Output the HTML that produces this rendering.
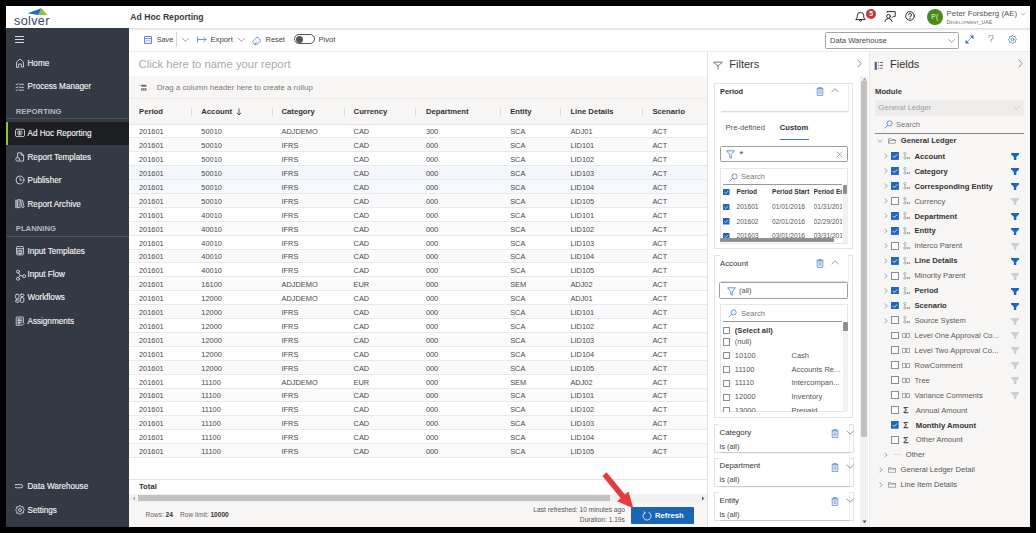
<!DOCTYPE html>
<html><head><meta charset="utf-8"><style>*{box-sizing:border-box;margin:0;padding:0}
html,body{width:1036px;height:533px;overflow:hidden;background:#000}
body{font-family:"Liberation Sans",sans-serif;color:#333;position:relative}
.a{position:absolute;white-space:nowrap}
.si{font-size:8.15px;color:#f4f5f6;-webkit-text-stroke:0.12px #f4f5f6;line-height:10px;left:27.5px}
.sec{left:15.8px;font-size:7.7px;font-weight:bold;color:#b4b8be;line-height:10px}
.sep{left:6px;width:122.5px;height:1px;background:#4b5159}
</style></head><body>
<div class="a" style="left:6px;top:6px;width:1024px;height:521px;background:#fff"></div>
<div class="a" style="left:6px;top:6px;width:1024px;height:22px;background:#fff"></div>
<svg class="a" style="left:26px;top:7px" width="24" height="10" viewBox="0 0 24 10"><path d="M1.5 6.3 L15.5 1.3 L12.4 7.9 Z" fill="#1f6cc2"/><path d="M15.5 1.3 L21.7 8.3 L12.4 7.9 Z" fill="#8dc540"/></svg>
<div class="a" style="left:14px;top:13.8px;font-size:12.6px;line-height:14px;color:#3a4766;letter-spacing:0.35px">solver</div>
<div class="a" style="left:130.3px;top:11.6px;font-size:8.65px;line-height:11px;font-weight:bold;color:#383838">Ad Hoc Reporting</div>
<svg class="a" style="left:854.5px;top:11px" width="11" height="11" viewBox="0 0 11 11"><path d="M1 8.4 Q2.3 7.6 2.3 5.8 V4.6 A3.2 3.2 0 0 1 8.7 4.6 V5.8 Q8.7 7.6 10 8.4 Z" stroke="#2a2a2a" stroke-width="1" fill="none" stroke-linecap="round" stroke-linejoin="round"/><path d="M4.3 9.6 Q5.5 10.8 6.7 9.6" stroke="#2a2a2a" stroke-width="1" fill="none" stroke-linecap="round" stroke-linejoin="round"/></svg>
<div class="a" style="left:866.1px;top:8.5px;width:10px;height:10px;border-radius:50%;background:#c93434;color:#fff;font-size:6.8px;font-weight:bold;line-height:10px;text-align:center">5</div>
<svg class="a" style="left:883.8px;top:11px" width="12" height="11" viewBox="0 0 12 11"><circle cx="4.5" cy="5.3" r="1.9" stroke="#2a2a2a" stroke-width="1" fill="none" stroke-linecap="round" stroke-linejoin="round"/><path d="M0.8 10.4 Q1.3 7.6 4.5 7.6 Q7.7 7.6 8.2 10.4 M3 1.3 V0.6 H11.2 V5.4 H9.3 L8.2 6.5" stroke="#2a2a2a" stroke-width="1" fill="none" stroke-linecap="round" stroke-linejoin="round"/></svg>
<svg class="a" style="left:905.4px;top:11.4px" width="10" height="10" viewBox="0 0 10 10"><circle cx="5" cy="5" r="4.3" stroke="#2a2a2a" stroke-width="1" fill="none" stroke-linecap="round" stroke-linejoin="round"/><path d="M3.6 3.9 A1.45 1.45 0 1 1 5 5.4 V6.1" stroke="#2a2a2a" stroke-width="0.9" fill="none" stroke-linecap="round"/><circle cx="5" cy="7.6" r="0.55" fill="#2a2a2a"/></svg>
<div class="a" style="left:926.6px;top:8.9px;width:16.4px;height:16.4px;border-radius:50%;background:#4a8a18;color:#eef5e0;font-size:7px;font-weight:normal;line-height:16.4px;text-align:center">P(</div>
<div class="a" style="left:946.6px;top:9.3px;font-size:7.9px;line-height:10px;color:#555">Peter Forsberg (AE)</div>
<div class="a" style="left:946.6px;top:19.3px;font-size:5.05px;line-height:7px;color:#666;font-variant:small-caps;letter-spacing:0.1px">Development_UAE</div>
<svg class="a" style="left:1020px;top:12px" width="6" height="4" viewBox="0 0 6 4"><path d="M0.5 0.8 L3 3 L5.5 0.8" stroke="#999" stroke-width="0.7" fill="none"/></svg>
<div class="a" style="left:128.5px;top:28px;width:901.5px;height:2.5px;background:linear-gradient(#d9d9d9,rgba(255,255,255,0))"></div>
<div class="a" style="left:6px;top:28px;width:122.5px;height:499px;background:#343a43"></div>
<div class="a" style="left:15px;top:36px;width:9px;height:1.2px;background:#d8dadd"></div>
<div class="a" style="left:15px;top:39px;width:9px;height:1.2px;background:#d8dadd"></div>
<div class="a" style="left:15px;top:42px;width:9px;height:1.2px;background:#d8dadd"></div>
<div class="a" style="left:6px;top:122px;width:122.5px;height:22.6px;background:#1e1f23"></div>
<div class="a" style="left:6px;top:122px;width:2.2px;height:22.6px;background:#8cc43f"></div>
<div class="a sec" style="top:106.6px">REPORTING</div>
<div class="a sep" style="top:118px"></div>
<div class="a sec" style="top:223.8px">PLANNING</div>
<div class="a sep" style="top:235.6px"></div>
<div class="a si" style="top:58.8px">Home</div>
<svg class="a" style="left:14.5px;top:58px" width="10" height="10" viewBox="0 0 10 10"><path d="M1.5 9 V4.2 L5 1 L8.5 4.2 V9 H6.3 V6 H3.7 V9 Z" stroke="#d5d7da" stroke-width="0.9" fill="none" stroke-linecap="round" stroke-linejoin="round"/></svg>
<div class="a si" style="top:82.3px">Process Manager</div>
<svg class="a" style="left:14.5px;top:81.5px" width="10" height="10" viewBox="0 0 10 10"><path d="M1 2.2 L1.8 3 L3 1.6 M1 5.2 L1.8 6 L3 4.6 M1 8 L1.8 8.6 L3 7.4 M4.5 2.3 H8.5 M4.5 5.3 H8.5 M4.5 8.1 H8.5" stroke="#d5d7da" stroke-width="0.9" fill="none" stroke-linecap="round" stroke-linejoin="round"/></svg>
<div class="a si" style="top:129.20000000000002px">Ad Hoc Reporting</div>
<svg class="a" style="left:14.5px;top:128.4px" width="10" height="10" viewBox="0 0 10 10"><rect x="0.5" y="1.2" width="9" height="7.4" rx="1.4" stroke="#d5d7da" stroke-width="0.9" fill="none" stroke-linecap="round" stroke-linejoin="round"/><path d="M2.8 3.2 H7 M2.2 5 H7.4 M3.2 6.8 H6.4 M4.6 3.2 V6.8" stroke="#d5d7da" stroke-width="0.9" fill="none" stroke-linecap="round" stroke-linejoin="round"/></svg>
<div class="a si" style="top:152.60000000000002px">Report Templates</div>
<svg class="a" style="left:14.5px;top:151.8px" width="10" height="10" viewBox="0 0 10 10"><path d="M2.6 5.2 V0.9 H6.2 L8.6 3.3 V9.1 H4.6 M6.2 0.9 V3.3 H8.6" stroke="#d5d7da" stroke-width="0.9" fill="none" stroke-linecap="round" stroke-linejoin="round"/><circle cx="2.7" cy="7.3" r="1.9" stroke="#d5d7da" stroke-width="0.9" fill="none" stroke-linecap="round" stroke-linejoin="round"/></svg>
<div class="a si" style="top:176.10000000000002px">Publisher</div>
<svg class="a" style="left:14.5px;top:175.3px" width="10" height="10" viewBox="0 0 10 10"><circle cx="5" cy="5" r="4" stroke="#d5d7da" stroke-width="0.9" fill="none" stroke-linecap="round" stroke-linejoin="round"/><path d="M5 2.8 V5.2 H7" stroke="#d5d7da" stroke-width="0.9" fill="none" stroke-linecap="round" stroke-linejoin="round"/></svg>
<div class="a si" style="top:199.8px">Report Archive</div>
<svg class="a" style="left:14.5px;top:199px" width="10" height="10" viewBox="0 0 10 10"><g transform="translate(-0.7 -0.5)"><path d="M0.3 1.6 H3.2 V9.2 H0.3 Z" fill="#8f9399" stroke="#c9cbce" stroke-width="0.6"/><path d="M3.9 1.2 H5.7 V9.2 H3.9 Z" stroke="#d5d7da" stroke-width="0.9" fill="none" stroke-linecap="round" stroke-linejoin="round"/><path d="M6.6 1.6 Q7.6 0.8 8.4 2.2 L9.7 8.2 Q9.4 9.4 8.2 9.2 Z" stroke="#d5d7da" stroke-width="0.9" fill="none" stroke-linecap="round" stroke-linejoin="round"/></g></svg>
<div class="a si" style="top:246.8px">Input Templates</div>
<svg class="a" style="left:14.5px;top:246px" width="10" height="10" viewBox="0 0 10 10"><rect x="1.6" y="0.3" width="6.8" height="8.6" rx="1.2" stroke="#d5d7da" stroke-width="0.9" fill="none" stroke-linecap="round" stroke-linejoin="round"/><path d="M1.6 2.7 H8.4 M3.2 4.7 H6.8 V7.6 H3.2 Z M5 4.7 V7.6" stroke="#d5d7da" stroke-width="0.9" fill="none" stroke-linecap="round" stroke-linejoin="round"/></svg>
<div class="a si" style="top:270.2px">Input Flow</div>
<svg class="a" style="left:14.5px;top:269.4px" width="11" height="12" viewBox="0 0 11 12"><circle cx="3" cy="2.6" r="1.5" stroke="#d5d7da" stroke-width="0.9" fill="none" stroke-linecap="round" stroke-linejoin="round"/><circle cx="3" cy="9.8" r="1.5" stroke="#d5d7da" stroke-width="0.9" fill="none" stroke-linecap="round" stroke-linejoin="round"/><circle cx="9.2" cy="7.2" r="1.5" stroke="#d5d7da" stroke-width="0.9" fill="none" stroke-linecap="round" stroke-linejoin="round"/><path d="M3.6 4 L5 6.6 L7.7 7.1 M5 6.6 L3.6 8.4" stroke="#d5d7da" stroke-width="0.9" fill="none" stroke-linecap="round" stroke-linejoin="round"/></svg>
<div class="a si" style="top:293.3px">Workflows</div>
<svg class="a" style="left:14.5px;top:292.5px" width="10" height="10" viewBox="0 0 10 10"><rect x="0.6" y="1.3" width="3.4" height="4.4" rx="0.9" stroke="#d5d7da" stroke-width="0.9" fill="none" stroke-linecap="round" stroke-linejoin="round"/><rect x="0.6" y="6.9" width="3.4" height="2.4" rx="0.9" stroke="#d5d7da" stroke-width="0.9" fill="none" stroke-linecap="round" stroke-linejoin="round"/><rect x="5.4" y="1.1" width="3.4" height="2.4" rx="0.9" stroke="#d5d7da" stroke-width="0.9" fill="none" stroke-linecap="round" stroke-linejoin="round"/><rect x="5.4" y="4.7" width="3.4" height="4.6" rx="0.9" stroke="#d5d7da" stroke-width="0.9" fill="none" stroke-linecap="round" stroke-linejoin="round"/></svg>
<div class="a si" style="top:316.8px">Assignments</div>
<svg class="a" style="left:14.5px;top:316px" width="10" height="10" viewBox="0 0 10 10"><path d="M8.4 6.5 V1.8 Q8.4 1 7.6 1 H2 Q1.2 1 1.2 1.8 V9 Q1.2 9.8 2 9.8 H5.6" stroke="#d5d7da" stroke-width="0.9" fill="none" stroke-linecap="round" stroke-linejoin="round"/><path d="M2.8 3 H6.8 M2.8 4.6 H6.8 M2.8 6.2 H6.8 M2.8 7.8 H5 M4 2.4 V8.4 M6.2 8.6 L7.1 9.4 L8.9 7.6" stroke="#d5d7da" stroke-width="0.9" fill="none" stroke-linecap="round" stroke-linejoin="round"/></svg>
<div class="a si" style="top:482.1px">Data Warehouse</div>
<svg class="a" style="left:14.5px;top:481.3px" width="10" height="10" viewBox="0 0 10 10"><rect x="-0.6" y="3.6" width="8.2" height="3.2" rx="1.6" stroke="#d5d7da" stroke-width="0.9" fill="none" stroke-linecap="round" stroke-linejoin="round"/></svg>
<div class="a si" style="top:505.8px">Settings</div>
<svg class="a" style="left:14.5px;top:505px" width="10" height="10" viewBox="0 0 10 10"><circle cx="5" cy="5" r="1.5" stroke="#d5d7da" stroke-width="0.9" fill="none" stroke-linecap="round" stroke-linejoin="round"/><path d="M5 0.6 L6.1 1.8 L7.9 1.6 L8 3.4 L9.4 4.6 L8.4 6 L8.6 7.9 L6.8 8 L5 9.4 L3.6 8.2 L1.9 8.4 L1.8 6.6 L0.6 5 L1.8 3.6 L1.6 1.8 L3.4 1.8 Z" stroke="#d5d7da" stroke-width="0.9" fill="none" stroke-linecap="round" stroke-linejoin="round"/></svg>
<svg class="a" style="left:144px;top:35.6px" width="8" height="8" viewBox="0 0 8 8"><path d="M0.5 0.5 H7.5 V7.5 H0.5 Z" stroke="#6b74c4" stroke-width="0.9" fill="none"/><path d="M0.5 2.6 H7.5" stroke="#6b74c4" stroke-width="0.9"/><path d="M2 7.5 V4.6 H6 V7.5" stroke="#7fa6dc" stroke-width="0.7" fill="none"/></svg>
<div class="a" style="left:156.7px;top:34.6px;font-size:7.3px;line-height:10px;color:#444">Save</div>
<div class="a" style="left:176.3px;top:32px;width:0.8px;height:14.6px;background:#d6d6d6"></div>
<svg class="a" style="left:182px;top:38px" width="7" height="4" viewBox="0 0 7 4"><path d="M0.5 0.5 L3.5 3.3 L6.5 0.5" stroke="#777" stroke-width="0.7" fill="none" stroke-linecap="round" stroke-linejoin="round"/></svg>
<svg class="a" style="left:197px;top:35.8px" width="10" height="7" viewBox="0 0 10 7"><path d="M0.5 1 V6 M0.5 3.5 H9 M6.8 1.3 L9 3.5 L6.8 5.7" stroke="#4a7bc8" stroke-width="0.8" fill="none" stroke-linecap="round" stroke-linejoin="round"/></svg>
<div class="a" style="left:210.4px;top:34.6px;font-size:7.75px;line-height:10px;color:#444">Export</div>
<svg class="a" style="left:238px;top:38px" width="7" height="4" viewBox="0 0 7 4"><path d="M0.5 0.5 L3.5 3.3 L6.5 0.5" stroke="#777" stroke-width="0.7" fill="none" stroke-linecap="round" stroke-linejoin="round"/></svg>
<svg class="a" style="left:252px;top:35.5px" width="10" height="9" viewBox="0 0 10 9"><path d="M0.8 5.5 L5 1 L9 4.5 L5 8.3 H2.8 Z M2.8 8.3 L4.5 6.2" stroke="#4a7bc8" stroke-width="0.8" fill="none" stroke-linecap="round" stroke-linejoin="round"/></svg>
<div class="a" style="left:265.6px;top:35.3px;font-size:7.35px;line-height:10px;color:#444">Reset</div>
<div class="a" style="left:294.2px;top:34.2px;width:20.8px;height:10.2px;border:0.8px solid #555;border-radius:6px"></div>
<div class="a" style="left:295.5px;top:35.9px;width:7.2px;height:7.2px;border-radius:50%;background:#555"></div>
<div class="a" style="left:318.4px;top:35.2px;font-size:7.6px;line-height:10px;color:#444">Pivot</div>
<div class="a" style="left:825px;top:32.2px;width:133.5px;height:16.4px;border:0.8px solid #a3a3a3;border-radius:1.5px;background:#fff"></div>
<div class="a" style="left:830px;top:36px;font-size:7.6px;line-height:10px;color:#444">Data Warehouse</div>
<svg class="a" style="left:947.7px;top:38.8px" width="7" height="4" viewBox="0 0 7 4"><path d="M0.5 0.5 L3.5 3.3 L6.5 0.5" stroke="#777" stroke-width="0.7" fill="none" stroke-linecap="round" stroke-linejoin="round"/></svg>
<svg class="a" style="left:964.8px;top:35.4px" width="9" height="9" viewBox="0 0 9 9"><path d="M1.6 7.4 L7.4 1.6" stroke="#3d6fc4" stroke-width="0.7"/><path d="M8.6 0.4 L8.4 4.2 L4.8 0.6 Z M0.4 8.6 L0.6 4.8 L4.2 8.4 Z" fill="#3d6fc4"/></svg>
<svg class="a" style="left:987.5px;top:35.2px" width="6" height="9" viewBox="0 0 6 9"><path d="M0.8 2.2 A2.2 2.2 0 1 1 3 4.4 V6.4" stroke="#4a7bc8" stroke-width="0.75" fill="none" stroke-linecap="round"/><circle cx="3" cy="8.1" r="0.45" fill="#4a7bc8"/></svg>
<svg class="a" style="left:1007.5px;top:35.1px" width="9" height="9" viewBox="0 0 10 10"><circle cx="5" cy="5" r="1.6" stroke="#4a7bc8" stroke-width="0.8" fill="none" stroke-linecap="round" stroke-linejoin="round"/><path d="M5 0.6 L6.2 1.7 L7.9 1.6 L8.1 3.3 L9.4 4.6 L8.3 6 L8.4 7.8 L6.7 8.1 L5 9.4 L3.7 8.2 L1.9 8.3 L1.7 6.6 L0.6 5 L1.8 3.6 L1.7 1.8 L3.4 1.8 Z" stroke="#4a7bc8" stroke-width="0.8" fill="none" stroke-linecap="round" stroke-linejoin="round"/></svg>
<div class="a" style="left:128.5px;top:50.8px;width:901.5px;height:0.8px;background:#ececec"></div>
<div class="a" style="left:138.6px;top:57.5px;font-size:11.3px;line-height:13px;color:#a9a9a9">Click here to name your report</div>
<div class="a" style="left:128.5px;top:76.2px;width:579px;height:48.3px;background:#f7f6f5"></div>
<div class="a" style="left:128.5px;top:98px;width:579px;height:0.7px;background:#ebebeb"></div>
<div class="a" style="left:128.5px;top:124px;width:579px;height:0.8px;background:#e4e6ea"></div>
<svg class="a" style="left:139px;top:84px" width="8" height="8" viewBox="0 0 8 8"><rect x="0.1" y="0.9" width="1.1" height="1" fill="#c9a0a0"/><rect x="2.2" y="0.8" width="5.2" height="1.8" fill="#5f5f5f"/><rect x="2.2" y="4" width="5.2" height="2.8" fill="#7a7a7a"/><path d="M3.9 4 V6.8 M5.6 4 V6.8" stroke="#e8e8e8" stroke-width="0.5"/></svg>
<div class="a" style="left:156.7px;top:82.6px;font-size:7.85px;line-height:10px;color:#777">Drag a column header here to create a rollup</div>
<div class="a" style="left:139px;top:107.4px;font-size:7.7px;line-height:10px;font-weight:bold;color:#333">Period</div>
<div class="a" style="left:201.3px;top:107.4px;font-size:7.7px;line-height:10px;font-weight:bold;color:#333">Account</div>
<div class="a" style="left:281.5px;top:107.4px;font-size:7.7px;line-height:10px;font-weight:bold;color:#333">Category</div>
<div class="a" style="left:353.6px;top:107.4px;font-size:7.7px;line-height:10px;font-weight:bold;color:#333">Currency</div>
<div class="a" style="left:425.9px;top:107.4px;font-size:7.7px;line-height:10px;font-weight:bold;color:#333">Department</div>
<div class="a" style="left:510.2px;top:107.4px;font-size:7.7px;line-height:10px;font-weight:bold;color:#333">Entity</div>
<div class="a" style="left:570.4px;top:107.4px;font-size:7.7px;line-height:10px;font-weight:bold;color:#333">Line Details</div>
<div class="a" style="left:652.4px;top:107.4px;font-size:7.7px;line-height:10px;font-weight:bold;color:#333">Scenario</div>
<svg class="a" style="left:236px;top:108px" width="6" height="8" viewBox="0 0 6 8"><path d="M3 0.5 V7 M0.8 4.8 L3 7 L5.2 4.8" stroke="#333" stroke-width="0.8" fill="none"/></svg>
<div class="a" style="left:191.2px;top:108px;width:0.7px;height:8px;background:#dcdcdc"></div>
<div class="a" style="left:271.5px;top:108px;width:0.7px;height:8px;background:#dcdcdc"></div>
<div class="a" style="left:343.5px;top:108px;width:0.7px;height:8px;background:#dcdcdc"></div>
<div class="a" style="left:415.2px;top:108px;width:0.7px;height:8px;background:#dcdcdc"></div>
<div class="a" style="left:500px;top:108px;width:0.7px;height:8px;background:#dcdcdc"></div>
<div class="a" style="left:560px;top:108px;width:0.7px;height:8px;background:#dcdcdc"></div>
<div class="a" style="left:641.8px;top:108px;width:0.7px;height:8px;background:#dcdcdc"></div>
<div class="a" style="left:128.5px;top:124.50px;width:579px;height:13.90px;background:#fff;border-bottom:0.7px solid #e6e9ee"></div>
<div class="a" style="left:139px;top:127.30px;font-size:7.4px;line-height:10px;color:#484848">201601</div>
<div class="a" style="left:201.3px;top:127.30px;font-size:7.4px;line-height:10px;color:#484848">50010</div>
<div class="a" style="left:281.5px;top:127.30px;font-size:7.4px;line-height:10px;color:#484848">ADJDEMO</div>
<div class="a" style="left:353.6px;top:127.30px;font-size:7.4px;line-height:10px;color:#484848">CAD</div>
<div class="a" style="left:425.9px;top:127.30px;font-size:7.4px;line-height:10px;color:#484848">300</div>
<div class="a" style="left:510.2px;top:127.30px;font-size:7.4px;line-height:10px;color:#484848">SCA</div>
<div class="a" style="left:570.4px;top:127.30px;font-size:7.4px;line-height:10px;color:#484848">ADJ01</div>
<div class="a" style="left:652.4px;top:127.30px;font-size:7.4px;line-height:10px;color:#484848">ACT</div>
<div class="a" style="left:128.5px;top:138.40px;width:579px;height:13.90px;background:#fafafa;border-bottom:0.7px solid #e6e9ee"></div>
<div class="a" style="left:139px;top:141.20px;font-size:7.4px;line-height:10px;color:#484848">201601</div>
<div class="a" style="left:201.3px;top:141.20px;font-size:7.4px;line-height:10px;color:#484848">50010</div>
<div class="a" style="left:281.5px;top:141.20px;font-size:7.4px;line-height:10px;color:#484848">IFRS</div>
<div class="a" style="left:353.6px;top:141.20px;font-size:7.4px;line-height:10px;color:#484848">CAD</div>
<div class="a" style="left:425.9px;top:141.20px;font-size:7.4px;line-height:10px;color:#484848">000</div>
<div class="a" style="left:510.2px;top:141.20px;font-size:7.4px;line-height:10px;color:#484848">SCA</div>
<div class="a" style="left:570.4px;top:141.20px;font-size:7.4px;line-height:10px;color:#484848">LID101</div>
<div class="a" style="left:652.4px;top:141.20px;font-size:7.4px;line-height:10px;color:#484848">ACT</div>
<div class="a" style="left:128.5px;top:152.30px;width:579px;height:13.90px;background:#fff;border-bottom:0.7px solid #e6e9ee"></div>
<div class="a" style="left:139px;top:155.10px;font-size:7.4px;line-height:10px;color:#484848">201601</div>
<div class="a" style="left:201.3px;top:155.10px;font-size:7.4px;line-height:10px;color:#484848">50010</div>
<div class="a" style="left:281.5px;top:155.10px;font-size:7.4px;line-height:10px;color:#484848">IFRS</div>
<div class="a" style="left:353.6px;top:155.10px;font-size:7.4px;line-height:10px;color:#484848">CAD</div>
<div class="a" style="left:425.9px;top:155.10px;font-size:7.4px;line-height:10px;color:#484848">000</div>
<div class="a" style="left:510.2px;top:155.10px;font-size:7.4px;line-height:10px;color:#484848">SCA</div>
<div class="a" style="left:570.4px;top:155.10px;font-size:7.4px;line-height:10px;color:#484848">LID102</div>
<div class="a" style="left:652.4px;top:155.10px;font-size:7.4px;line-height:10px;color:#484848">ACT</div>
<div class="a" style="left:128.5px;top:166.20px;width:579px;height:13.90px;background:#f3f6fa;border-bottom:0.7px solid #e6e9ee"></div>
<div class="a" style="left:139px;top:169.00px;font-size:7.4px;line-height:10px;color:#484848">201601</div>
<div class="a" style="left:201.3px;top:169.00px;font-size:7.4px;line-height:10px;color:#484848">50010</div>
<div class="a" style="left:281.5px;top:169.00px;font-size:7.4px;line-height:10px;color:#484848">IFRS</div>
<div class="a" style="left:353.6px;top:169.00px;font-size:7.4px;line-height:10px;color:#484848">CAD</div>
<div class="a" style="left:425.9px;top:169.00px;font-size:7.4px;line-height:10px;color:#484848">000</div>
<div class="a" style="left:510.2px;top:169.00px;font-size:7.4px;line-height:10px;color:#484848">SCA</div>
<div class="a" style="left:570.4px;top:169.00px;font-size:7.4px;line-height:10px;color:#484848">LID103</div>
<div class="a" style="left:652.4px;top:169.00px;font-size:7.4px;line-height:10px;color:#484848">ACT</div>
<div class="a" style="left:128.5px;top:180.10px;width:579px;height:13.90px;background:#f5f9fd;border-bottom:0.7px solid #e6e9ee"></div>
<div class="a" style="left:139px;top:182.90px;font-size:7.4px;line-height:10px;color:#484848">201601</div>
<div class="a" style="left:201.3px;top:182.90px;font-size:7.4px;line-height:10px;color:#484848">50010</div>
<div class="a" style="left:281.5px;top:182.90px;font-size:7.4px;line-height:10px;color:#484848">IFRS</div>
<div class="a" style="left:353.6px;top:182.90px;font-size:7.4px;line-height:10px;color:#484848">CAD</div>
<div class="a" style="left:425.9px;top:182.90px;font-size:7.4px;line-height:10px;color:#484848">000</div>
<div class="a" style="left:510.2px;top:182.90px;font-size:7.4px;line-height:10px;color:#484848">SCA</div>
<div class="a" style="left:570.4px;top:182.90px;font-size:7.4px;line-height:10px;color:#484848">LID104</div>
<div class="a" style="left:652.4px;top:182.90px;font-size:7.4px;line-height:10px;color:#484848">ACT</div>
<div class="a" style="left:128.5px;top:194.00px;width:579px;height:13.90px;background:#fafafa;border-bottom:0.7px solid #e6e9ee"></div>
<div class="a" style="left:139px;top:196.80px;font-size:7.4px;line-height:10px;color:#484848">201601</div>
<div class="a" style="left:201.3px;top:196.80px;font-size:7.4px;line-height:10px;color:#484848">50010</div>
<div class="a" style="left:281.5px;top:196.80px;font-size:7.4px;line-height:10px;color:#484848">IFRS</div>
<div class="a" style="left:353.6px;top:196.80px;font-size:7.4px;line-height:10px;color:#484848">CAD</div>
<div class="a" style="left:425.9px;top:196.80px;font-size:7.4px;line-height:10px;color:#484848">000</div>
<div class="a" style="left:510.2px;top:196.80px;font-size:7.4px;line-height:10px;color:#484848">SCA</div>
<div class="a" style="left:570.4px;top:196.80px;font-size:7.4px;line-height:10px;color:#484848">LID105</div>
<div class="a" style="left:652.4px;top:196.80px;font-size:7.4px;line-height:10px;color:#484848">ACT</div>
<div class="a" style="left:128.5px;top:207.90px;width:579px;height:13.90px;background:#fff;border-bottom:0.7px solid #e6e9ee"></div>
<div class="a" style="left:139px;top:210.70px;font-size:7.4px;line-height:10px;color:#484848">201601</div>
<div class="a" style="left:201.3px;top:210.70px;font-size:7.4px;line-height:10px;color:#484848">40010</div>
<div class="a" style="left:281.5px;top:210.70px;font-size:7.4px;line-height:10px;color:#484848">IFRS</div>
<div class="a" style="left:353.6px;top:210.70px;font-size:7.4px;line-height:10px;color:#484848">CAD</div>
<div class="a" style="left:425.9px;top:210.70px;font-size:7.4px;line-height:10px;color:#484848">000</div>
<div class="a" style="left:510.2px;top:210.70px;font-size:7.4px;line-height:10px;color:#484848">SCA</div>
<div class="a" style="left:570.4px;top:210.70px;font-size:7.4px;line-height:10px;color:#484848">LID101</div>
<div class="a" style="left:652.4px;top:210.70px;font-size:7.4px;line-height:10px;color:#484848">ACT</div>
<div class="a" style="left:128.5px;top:221.80px;width:579px;height:13.90px;background:#fafafa;border-bottom:0.7px solid #e6e9ee"></div>
<div class="a" style="left:139px;top:224.60px;font-size:7.4px;line-height:10px;color:#484848">201601</div>
<div class="a" style="left:201.3px;top:224.60px;font-size:7.4px;line-height:10px;color:#484848">40010</div>
<div class="a" style="left:281.5px;top:224.60px;font-size:7.4px;line-height:10px;color:#484848">IFRS</div>
<div class="a" style="left:353.6px;top:224.60px;font-size:7.4px;line-height:10px;color:#484848">CAD</div>
<div class="a" style="left:425.9px;top:224.60px;font-size:7.4px;line-height:10px;color:#484848">000</div>
<div class="a" style="left:510.2px;top:224.60px;font-size:7.4px;line-height:10px;color:#484848">SCA</div>
<div class="a" style="left:570.4px;top:224.60px;font-size:7.4px;line-height:10px;color:#484848">LID102</div>
<div class="a" style="left:652.4px;top:224.60px;font-size:7.4px;line-height:10px;color:#484848">ACT</div>
<div class="a" style="left:128.5px;top:235.70px;width:579px;height:13.90px;background:#fff;border-bottom:0.7px solid #e6e9ee"></div>
<div class="a" style="left:139px;top:238.50px;font-size:7.4px;line-height:10px;color:#484848">201601</div>
<div class="a" style="left:201.3px;top:238.50px;font-size:7.4px;line-height:10px;color:#484848">40010</div>
<div class="a" style="left:281.5px;top:238.50px;font-size:7.4px;line-height:10px;color:#484848">IFRS</div>
<div class="a" style="left:353.6px;top:238.50px;font-size:7.4px;line-height:10px;color:#484848">CAD</div>
<div class="a" style="left:425.9px;top:238.50px;font-size:7.4px;line-height:10px;color:#484848">000</div>
<div class="a" style="left:510.2px;top:238.50px;font-size:7.4px;line-height:10px;color:#484848">SCA</div>
<div class="a" style="left:570.4px;top:238.50px;font-size:7.4px;line-height:10px;color:#484848">LID103</div>
<div class="a" style="left:652.4px;top:238.50px;font-size:7.4px;line-height:10px;color:#484848">ACT</div>
<div class="a" style="left:128.5px;top:249.60px;width:579px;height:13.90px;background:#fafafa;border-bottom:0.7px solid #e6e9ee"></div>
<div class="a" style="left:139px;top:252.40px;font-size:7.4px;line-height:10px;color:#484848">201601</div>
<div class="a" style="left:201.3px;top:252.40px;font-size:7.4px;line-height:10px;color:#484848">40010</div>
<div class="a" style="left:281.5px;top:252.40px;font-size:7.4px;line-height:10px;color:#484848">IFRS</div>
<div class="a" style="left:353.6px;top:252.40px;font-size:7.4px;line-height:10px;color:#484848">CAD</div>
<div class="a" style="left:425.9px;top:252.40px;font-size:7.4px;line-height:10px;color:#484848">000</div>
<div class="a" style="left:510.2px;top:252.40px;font-size:7.4px;line-height:10px;color:#484848">SCA</div>
<div class="a" style="left:570.4px;top:252.40px;font-size:7.4px;line-height:10px;color:#484848">LID104</div>
<div class="a" style="left:652.4px;top:252.40px;font-size:7.4px;line-height:10px;color:#484848">ACT</div>
<div class="a" style="left:128.5px;top:263.50px;width:579px;height:13.90px;background:#fff;border-bottom:0.7px solid #e6e9ee"></div>
<div class="a" style="left:139px;top:266.30px;font-size:7.4px;line-height:10px;color:#484848">201601</div>
<div class="a" style="left:201.3px;top:266.30px;font-size:7.4px;line-height:10px;color:#484848">40010</div>
<div class="a" style="left:281.5px;top:266.30px;font-size:7.4px;line-height:10px;color:#484848">IFRS</div>
<div class="a" style="left:353.6px;top:266.30px;font-size:7.4px;line-height:10px;color:#484848">CAD</div>
<div class="a" style="left:425.9px;top:266.30px;font-size:7.4px;line-height:10px;color:#484848">000</div>
<div class="a" style="left:510.2px;top:266.30px;font-size:7.4px;line-height:10px;color:#484848">SCA</div>
<div class="a" style="left:570.4px;top:266.30px;font-size:7.4px;line-height:10px;color:#484848">LID105</div>
<div class="a" style="left:652.4px;top:266.30px;font-size:7.4px;line-height:10px;color:#484848">ACT</div>
<div class="a" style="left:128.5px;top:277.40px;width:579px;height:13.90px;background:#fafafa;border-bottom:0.7px solid #e6e9ee"></div>
<div class="a" style="left:139px;top:280.20px;font-size:7.4px;line-height:10px;color:#484848">201601</div>
<div class="a" style="left:201.3px;top:280.20px;font-size:7.4px;line-height:10px;color:#484848">16100</div>
<div class="a" style="left:281.5px;top:280.20px;font-size:7.4px;line-height:10px;color:#484848">ADJDEMO</div>
<div class="a" style="left:353.6px;top:280.20px;font-size:7.4px;line-height:10px;color:#484848">EUR</div>
<div class="a" style="left:425.9px;top:280.20px;font-size:7.4px;line-height:10px;color:#484848">000</div>
<div class="a" style="left:510.2px;top:280.20px;font-size:7.4px;line-height:10px;color:#484848">SEM</div>
<div class="a" style="left:570.4px;top:280.20px;font-size:7.4px;line-height:10px;color:#484848">ADJ02</div>
<div class="a" style="left:652.4px;top:280.20px;font-size:7.4px;line-height:10px;color:#484848">ACT</div>
<div class="a" style="left:128.5px;top:291.30px;width:579px;height:13.90px;background:#fff;border-bottom:0.7px solid #e6e9ee"></div>
<div class="a" style="left:139px;top:294.10px;font-size:7.4px;line-height:10px;color:#484848">201601</div>
<div class="a" style="left:201.3px;top:294.10px;font-size:7.4px;line-height:10px;color:#484848">12000</div>
<div class="a" style="left:281.5px;top:294.10px;font-size:7.4px;line-height:10px;color:#484848">ADJDEMO</div>
<div class="a" style="left:353.6px;top:294.10px;font-size:7.4px;line-height:10px;color:#484848">CAD</div>
<div class="a" style="left:425.9px;top:294.10px;font-size:7.4px;line-height:10px;color:#484848">000</div>
<div class="a" style="left:510.2px;top:294.10px;font-size:7.4px;line-height:10px;color:#484848">SCA</div>
<div class="a" style="left:570.4px;top:294.10px;font-size:7.4px;line-height:10px;color:#484848">ADJ01</div>
<div class="a" style="left:652.4px;top:294.10px;font-size:7.4px;line-height:10px;color:#484848">ACT</div>
<div class="a" style="left:128.5px;top:305.20px;width:579px;height:13.90px;background:#fafafa;border-bottom:0.7px solid #e6e9ee"></div>
<div class="a" style="left:139px;top:308.00px;font-size:7.4px;line-height:10px;color:#484848">201601</div>
<div class="a" style="left:201.3px;top:308.00px;font-size:7.4px;line-height:10px;color:#484848">12000</div>
<div class="a" style="left:281.5px;top:308.00px;font-size:7.4px;line-height:10px;color:#484848">IFRS</div>
<div class="a" style="left:353.6px;top:308.00px;font-size:7.4px;line-height:10px;color:#484848">CAD</div>
<div class="a" style="left:425.9px;top:308.00px;font-size:7.4px;line-height:10px;color:#484848">000</div>
<div class="a" style="left:510.2px;top:308.00px;font-size:7.4px;line-height:10px;color:#484848">SCA</div>
<div class="a" style="left:570.4px;top:308.00px;font-size:7.4px;line-height:10px;color:#484848">LID101</div>
<div class="a" style="left:652.4px;top:308.00px;font-size:7.4px;line-height:10px;color:#484848">ACT</div>
<div class="a" style="left:128.5px;top:319.10px;width:579px;height:13.90px;background:#fff;border-bottom:0.7px solid #e6e9ee"></div>
<div class="a" style="left:139px;top:321.90px;font-size:7.4px;line-height:10px;color:#484848">201601</div>
<div class="a" style="left:201.3px;top:321.90px;font-size:7.4px;line-height:10px;color:#484848">12000</div>
<div class="a" style="left:281.5px;top:321.90px;font-size:7.4px;line-height:10px;color:#484848">IFRS</div>
<div class="a" style="left:353.6px;top:321.90px;font-size:7.4px;line-height:10px;color:#484848">CAD</div>
<div class="a" style="left:425.9px;top:321.90px;font-size:7.4px;line-height:10px;color:#484848">000</div>
<div class="a" style="left:510.2px;top:321.90px;font-size:7.4px;line-height:10px;color:#484848">SCA</div>
<div class="a" style="left:570.4px;top:321.90px;font-size:7.4px;line-height:10px;color:#484848">LID102</div>
<div class="a" style="left:652.4px;top:321.90px;font-size:7.4px;line-height:10px;color:#484848">ACT</div>
<div class="a" style="left:128.5px;top:333.00px;width:579px;height:13.90px;background:#fafafa;border-bottom:0.7px solid #e6e9ee"></div>
<div class="a" style="left:139px;top:335.80px;font-size:7.4px;line-height:10px;color:#484848">201601</div>
<div class="a" style="left:201.3px;top:335.80px;font-size:7.4px;line-height:10px;color:#484848">12000</div>
<div class="a" style="left:281.5px;top:335.80px;font-size:7.4px;line-height:10px;color:#484848">IFRS</div>
<div class="a" style="left:353.6px;top:335.80px;font-size:7.4px;line-height:10px;color:#484848">CAD</div>
<div class="a" style="left:425.9px;top:335.80px;font-size:7.4px;line-height:10px;color:#484848">000</div>
<div class="a" style="left:510.2px;top:335.80px;font-size:7.4px;line-height:10px;color:#484848">SCA</div>
<div class="a" style="left:570.4px;top:335.80px;font-size:7.4px;line-height:10px;color:#484848">LID103</div>
<div class="a" style="left:652.4px;top:335.80px;font-size:7.4px;line-height:10px;color:#484848">ACT</div>
<div class="a" style="left:128.5px;top:346.90px;width:579px;height:13.90px;background:#fff;border-bottom:0.7px solid #e6e9ee"></div>
<div class="a" style="left:139px;top:349.70px;font-size:7.4px;line-height:10px;color:#484848">201601</div>
<div class="a" style="left:201.3px;top:349.70px;font-size:7.4px;line-height:10px;color:#484848">12000</div>
<div class="a" style="left:281.5px;top:349.70px;font-size:7.4px;line-height:10px;color:#484848">IFRS</div>
<div class="a" style="left:353.6px;top:349.70px;font-size:7.4px;line-height:10px;color:#484848">CAD</div>
<div class="a" style="left:425.9px;top:349.70px;font-size:7.4px;line-height:10px;color:#484848">000</div>
<div class="a" style="left:510.2px;top:349.70px;font-size:7.4px;line-height:10px;color:#484848">SCA</div>
<div class="a" style="left:570.4px;top:349.70px;font-size:7.4px;line-height:10px;color:#484848">LID104</div>
<div class="a" style="left:652.4px;top:349.70px;font-size:7.4px;line-height:10px;color:#484848">ACT</div>
<div class="a" style="left:128.5px;top:360.80px;width:579px;height:13.90px;background:#fafafa;border-bottom:0.7px solid #e6e9ee"></div>
<div class="a" style="left:139px;top:363.60px;font-size:7.4px;line-height:10px;color:#484848">201601</div>
<div class="a" style="left:201.3px;top:363.60px;font-size:7.4px;line-height:10px;color:#484848">12000</div>
<div class="a" style="left:281.5px;top:363.60px;font-size:7.4px;line-height:10px;color:#484848">IFRS</div>
<div class="a" style="left:353.6px;top:363.60px;font-size:7.4px;line-height:10px;color:#484848">CAD</div>
<div class="a" style="left:425.9px;top:363.60px;font-size:7.4px;line-height:10px;color:#484848">000</div>
<div class="a" style="left:510.2px;top:363.60px;font-size:7.4px;line-height:10px;color:#484848">SCA</div>
<div class="a" style="left:570.4px;top:363.60px;font-size:7.4px;line-height:10px;color:#484848">LID105</div>
<div class="a" style="left:652.4px;top:363.60px;font-size:7.4px;line-height:10px;color:#484848">ACT</div>
<div class="a" style="left:128.5px;top:374.70px;width:579px;height:13.90px;background:#fff;border-bottom:0.7px solid #e6e9ee"></div>
<div class="a" style="left:139px;top:377.50px;font-size:7.4px;line-height:10px;color:#484848">201601</div>
<div class="a" style="left:201.3px;top:377.50px;font-size:7.4px;line-height:10px;color:#484848">11100</div>
<div class="a" style="left:281.5px;top:377.50px;font-size:7.4px;line-height:10px;color:#484848">ADJDEMO</div>
<div class="a" style="left:353.6px;top:377.50px;font-size:7.4px;line-height:10px;color:#484848">EUR</div>
<div class="a" style="left:425.9px;top:377.50px;font-size:7.4px;line-height:10px;color:#484848">000</div>
<div class="a" style="left:510.2px;top:377.50px;font-size:7.4px;line-height:10px;color:#484848">SEM</div>
<div class="a" style="left:570.4px;top:377.50px;font-size:7.4px;line-height:10px;color:#484848">ADJ02</div>
<div class="a" style="left:652.4px;top:377.50px;font-size:7.4px;line-height:10px;color:#484848">ACT</div>
<div class="a" style="left:128.5px;top:388.60px;width:579px;height:13.90px;background:#fafafa;border-bottom:0.7px solid #e6e9ee"></div>
<div class="a" style="left:139px;top:391.40px;font-size:7.4px;line-height:10px;color:#484848">201601</div>
<div class="a" style="left:201.3px;top:391.40px;font-size:7.4px;line-height:10px;color:#484848">11100</div>
<div class="a" style="left:281.5px;top:391.40px;font-size:7.4px;line-height:10px;color:#484848">IFRS</div>
<div class="a" style="left:353.6px;top:391.40px;font-size:7.4px;line-height:10px;color:#484848">CAD</div>
<div class="a" style="left:425.9px;top:391.40px;font-size:7.4px;line-height:10px;color:#484848">000</div>
<div class="a" style="left:510.2px;top:391.40px;font-size:7.4px;line-height:10px;color:#484848">SCA</div>
<div class="a" style="left:570.4px;top:391.40px;font-size:7.4px;line-height:10px;color:#484848">LID101</div>
<div class="a" style="left:652.4px;top:391.40px;font-size:7.4px;line-height:10px;color:#484848">ACT</div>
<div class="a" style="left:128.5px;top:402.50px;width:579px;height:13.90px;background:#fff;border-bottom:0.7px solid #e6e9ee"></div>
<div class="a" style="left:139px;top:405.30px;font-size:7.4px;line-height:10px;color:#484848">201601</div>
<div class="a" style="left:201.3px;top:405.30px;font-size:7.4px;line-height:10px;color:#484848">11100</div>
<div class="a" style="left:281.5px;top:405.30px;font-size:7.4px;line-height:10px;color:#484848">IFRS</div>
<div class="a" style="left:353.6px;top:405.30px;font-size:7.4px;line-height:10px;color:#484848">CAD</div>
<div class="a" style="left:425.9px;top:405.30px;font-size:7.4px;line-height:10px;color:#484848">000</div>
<div class="a" style="left:510.2px;top:405.30px;font-size:7.4px;line-height:10px;color:#484848">SCA</div>
<div class="a" style="left:570.4px;top:405.30px;font-size:7.4px;line-height:10px;color:#484848">LID102</div>
<div class="a" style="left:652.4px;top:405.30px;font-size:7.4px;line-height:10px;color:#484848">ACT</div>
<div class="a" style="left:128.5px;top:416.40px;width:579px;height:13.90px;background:#fafafa;border-bottom:0.7px solid #e6e9ee"></div>
<div class="a" style="left:139px;top:419.20px;font-size:7.4px;line-height:10px;color:#484848">201601</div>
<div class="a" style="left:201.3px;top:419.20px;font-size:7.4px;line-height:10px;color:#484848">11100</div>
<div class="a" style="left:281.5px;top:419.20px;font-size:7.4px;line-height:10px;color:#484848">IFRS</div>
<div class="a" style="left:353.6px;top:419.20px;font-size:7.4px;line-height:10px;color:#484848">CAD</div>
<div class="a" style="left:425.9px;top:419.20px;font-size:7.4px;line-height:10px;color:#484848">000</div>
<div class="a" style="left:510.2px;top:419.20px;font-size:7.4px;line-height:10px;color:#484848">SCA</div>
<div class="a" style="left:570.4px;top:419.20px;font-size:7.4px;line-height:10px;color:#484848">LID103</div>
<div class="a" style="left:652.4px;top:419.20px;font-size:7.4px;line-height:10px;color:#484848">ACT</div>
<div class="a" style="left:128.5px;top:430.30px;width:579px;height:13.90px;background:#fff;border-bottom:0.7px solid #e6e9ee"></div>
<div class="a" style="left:139px;top:433.10px;font-size:7.4px;line-height:10px;color:#484848">201601</div>
<div class="a" style="left:201.3px;top:433.10px;font-size:7.4px;line-height:10px;color:#484848">11100</div>
<div class="a" style="left:281.5px;top:433.10px;font-size:7.4px;line-height:10px;color:#484848">IFRS</div>
<div class="a" style="left:353.6px;top:433.10px;font-size:7.4px;line-height:10px;color:#484848">CAD</div>
<div class="a" style="left:425.9px;top:433.10px;font-size:7.4px;line-height:10px;color:#484848">000</div>
<div class="a" style="left:510.2px;top:433.10px;font-size:7.4px;line-height:10px;color:#484848">SCA</div>
<div class="a" style="left:570.4px;top:433.10px;font-size:7.4px;line-height:10px;color:#484848">LID104</div>
<div class="a" style="left:652.4px;top:433.10px;font-size:7.4px;line-height:10px;color:#484848">ACT</div>
<div class="a" style="left:128.5px;top:444.20px;width:579px;height:13.90px;background:#fafafa;border-bottom:0.7px solid #e6e9ee"></div>
<div class="a" style="left:139px;top:447.00px;font-size:7.4px;line-height:10px;color:#484848">201601</div>
<div class="a" style="left:201.3px;top:447.00px;font-size:7.4px;line-height:10px;color:#484848">11100</div>
<div class="a" style="left:281.5px;top:447.00px;font-size:7.4px;line-height:10px;color:#484848">IFRS</div>
<div class="a" style="left:353.6px;top:447.00px;font-size:7.4px;line-height:10px;color:#484848">CAD</div>
<div class="a" style="left:425.9px;top:447.00px;font-size:7.4px;line-height:10px;color:#484848">000</div>
<div class="a" style="left:510.2px;top:447.00px;font-size:7.4px;line-height:10px;color:#484848">SCA</div>
<div class="a" style="left:570.4px;top:447.00px;font-size:7.4px;line-height:10px;color:#484848">LID105</div>
<div class="a" style="left:652.4px;top:447.00px;font-size:7.4px;line-height:10px;color:#484848">ACT</div>
<div class="a" style="left:128.5px;top:479px;width:579px;height:0.8px;background:#e3e3e3"></div>
<div class="a" style="left:139px;top:482px;font-size:7.7px;line-height:10px;font-weight:bold;color:#333">Total</div>
<div class="a" style="left:128.5px;top:494.3px;width:579px;height:7.7px;background:#f1f1f1"></div>
<div class="a" style="left:138px;top:495.3px;width:472px;height:5.6px;background:#c1c1c1"></div>
<svg class="a" style="left:131.5px;top:496px" width="4" height="5" viewBox="0 0 4 5"><path d="M3 0.5 L0.8 2.5 L3 4.5 Z" fill="#a3a3a3"/></svg>
<svg class="a" style="left:701px;top:496px" width="4" height="5" viewBox="0 0 4 5"><path d="M1 0.5 L3.2 2.5 L1 4.5 Z" fill="#505050"/></svg>
<div class="a" style="left:128.5px;top:502px;width:579px;height:25px;background:#f7f6f5"></div>
<div class="a" style="left:145.4px;top:510px;font-size:6.6px;line-height:9px;color:#666">Rows: <b style="color:#333">24</b></div>
<div class="a" style="left:180px;top:510px;font-size:6.6px;line-height:9px;color:#666">Row limit: <b style="color:#333">10000</b></div>
<div class="a" style="left:500px;top:505px;width:124.9px;text-align:right;font-size:6.65px;line-height:9px;color:#555">Last refreshed: 10 minutes ago</div>
<div class="a" style="left:500px;top:514.5px;width:124.9px;text-align:right;font-size:6.65px;line-height:9px;color:#555">Duration: 1.19s</div>
<div class="a" style="left:630.7px;top:507.3px;width:63.6px;height:16.7px;background:#1b65b5;border-radius:1px"></div>
<svg class="a" style="left:641.5px;top:511px" width="10" height="10" viewBox="0 0 10 10"><path d="M3 1.6 A4 4 0 1 0 6.5 1.3" stroke="#fff" stroke-width="0.8" fill="none"/><path d="M1.8 0.6 L3.3 1.6 L2.2 3" stroke="#fff" stroke-width="0.8" fill="none"/></svg>
<div class="a" style="left:655px;top:510.5px;font-size:7.7px;line-height:10px;font-weight:bold;color:#fff">Refresh</div>
<svg class="a" style="left:595px;top:465px" width="45" height="50" viewBox="0 0 45 50"><path d="M7.4 10.9 L11.6 7.3 L29.9 29.6 L33.5 26.6 L38.3 43.2 L22.1 36.2 L25.7 33.2 Z" fill="#e83a3d"/></svg>
<div class="a" style="left:707.3px;top:51px;width:1px;height:476px;background:#e2e2e2"></div>
<div class="a" style="left:708.3px;top:51.6px;width:160.2px;height:475.4px;background:#fff"></div>
<svg class="a" style="left:713px;top:61px" width="10" height="9" viewBox="0 0 10 9"><path d="M0.6 1.2 H9.4 L5 4.9 Z" stroke="#505060" stroke-width="0.75" fill="none" stroke-linejoin="round"/><path d="M5 4.9 V8.5" stroke="#6a5a8a" stroke-width="1"/></svg>
<div class="a" style="left:729.3px;top:57.5px;font-size:11px;line-height:13px;color:#333">Filters</div>
<svg class="a" style="left:856.5px;top:58.5px" width="5" height="9" viewBox="0 0 5 9"><path d="M0.7 0.7 L4.2 4.5 L0.7 8.3" stroke="#777" stroke-width="0.8" fill="none"/></svg>
<div class="a" style="left:860px;top:76px;width:7.5px;height:451px;background:#f1f1f1"></div>
<div class="a" style="left:860.6px;top:81.4px;width:6.3px;height:355.6px;background:#c1c1c1"></div>
<svg class="a" style="left:861.5px;top:76.5px" width="5" height="4" viewBox="0 0 5 4"><path d="M0.5 3.5 L2.5 0.8 L4.5 3.5 Z" fill="#a3a3a3"/></svg>
<svg class="a" style="left:861.5px;top:520px" width="5" height="4" viewBox="0 0 5 4"><path d="M0.5 0.5 L2.5 3.2 L4.5 0.5 Z" fill="#505050"/></svg>
<div class="a" style="left:714.2px;top:83px;width:139.3px;height:165.5px;border:0.8px solid #e3e3e3;background:#fff"></div>
<div class="a" style="left:719.6px;top:83.7px;width:128.6px;height:27.5px;background:#fff;box-shadow:0.5px 1px 1.5px rgba(0,0,0,0.22)"></div>
<div class="a" style="left:720px;top:86.80px;font-size:7.45px;line-height:10px;color:#333;font-weight:bold;">Period</div>
<svg class="a" style="left:815.5px;top:87.3px" width="8" height="9" viewBox="0 0 8 9"><path d="M1.2 2 H6.8 V8.4 H1.2 Z M0.6 1.3 H7.4 M2.8 1.3 V0.5 H5.2 V1.3" stroke="#5a86cc" stroke-width="0.8" fill="none"/><rect x="2.4" y="3.2" width="3.2" height="4" fill="#a9c0e6"/></svg>
<svg class="a" style="left:830.5px;top:87.8px" width="9" height="5" viewBox="0 0 9 5"><path d="M0.6 4.1 L4.1 0.8 L7.6 4.1" stroke="#777" stroke-width="0.75" fill="none"/></svg>
<div class="a" style="left:725.5px;top:123.20px;font-size:7.66px;line-height:10px;color:#555;">Pre-defined</div>
<div class="a" style="left:779.8px;top:123.20px;font-size:7.68px;line-height:10px;color:#333;font-weight:bold;">Custom</div>
<div class="a" style="left:779.8px;top:138.5px;width:29px;height:1.1px;background:#3a78c3"></div>
<div class="a" style="left:719.6px;top:145.6px;width:128.4px;height:16.2px;border:0.8px solid #9e9e9e;border-radius:1.5px;background:#fff"></div>
<svg class="a" style="left:726.4px;top:149.5px" width="9" height="9" viewBox="0 0 9 9"><path d="M0.6 0.8 H8.4 L5.3 4.6 V8.3 L3.7 7.3 V4.6 Z" stroke="#4a7bc8" stroke-width="0.8" fill="none" stroke-linejoin="round"/></svg>
<div class="a" style="left:739.6px;top:149.20px;font-size:9.5px;line-height:10px;color:#444;">*</div>
<svg class="a" style="left:835.6px;top:150.5px" width="7" height="7" viewBox="0 0 7 7"><path d="M0.6 0.6 L6.4 6.4 M6.4 0.6 L0.6 6.4" stroke="#888" stroke-width="0.7"/></svg>
<div class="a" style="left:719.6px;top:167.5px;width:128.4px;height:76px;border:0.8px solid #e6e6e6;background:#fff"></div>
<svg class="a" style="left:728.6px;top:172.5px" width="9" height="9" viewBox="0 0 9 9"><circle cx="5.6" cy="3.4" r="2.6" stroke="#4a7bc8" stroke-width="0.8" fill="none"/><path d="M3.7 5.3 L0.7 8.3" stroke="#4a7bc8" stroke-width="0.8"/></svg>
<div class="a" style="left:741px;top:171.50px;font-size:7.6px;line-height:10px;color:#777;">Search</div>
<div class="a" style="left:723px;top:184.3px;width:119px;height:0.8px;background:#999"></div>
<svg class="a" style="left:723px;top:188.5px" width="6.5" height="6.5" viewBox="0 0 8 8"><rect x="0" y="0" width="8" height="8" fill="#1f66c1"/><path d="M1.8 4.1 L3.3 5.6 L6.3 2.5" stroke="#fff" stroke-width="0.8" fill="none"/></svg>
<div class="a" style="left:736.5px;top:187.30px;font-size:6.6px;line-height:10px;color:#333;font-weight:bold;">Period</div>
<div class="a" style="left:772px;top:187.30px;font-size:6.6px;line-height:10px;color:#333;font-weight:bold;">Period Start</div>
<div class="a" style="left:813.6px;top:187.30px;font-size:6.6px;line-height:10px;color:#333;font-weight:bold;overflow:hidden;width:28.5px">Period En</div>
<div class="a" style="left:720.5px;top:200px;width:122px;height:14px;overflow:hidden">
<svg class="a" style="left:2.5px;top:3.5px" width="6.5" height="6.5" viewBox="0 0 8 8"><rect x="0" y="0" width="8" height="8" fill="#1f66c1"/><path d="M1.8 4.1 L3.3 5.6 L6.3 2.5" stroke="#fff" stroke-width="0.8" fill="none"/></svg>
<div class="a" style="left:16px;top:2.00px;font-size:6.6px;line-height:10px;color:#555;">201601</div>
<div class="a" style="left:51.5px;top:2.00px;font-size:6.6px;line-height:10px;color:#555;">01/01/2016</div>
<div class="a" style="left:93.1px;top:2.00px;font-size:6.6px;line-height:10px;color:#555;width:28.5px;overflow:hidden">01/31/2016</div>
</div>
<div class="a" style="left:720.5px;top:214.6px;width:122px;height:14px;overflow:hidden">
<svg class="a" style="left:2.5px;top:3.5px" width="6.5" height="6.5" viewBox="0 0 8 8"><rect x="0" y="0" width="8" height="8" fill="#1f66c1"/><path d="M1.8 4.1 L3.3 5.6 L6.3 2.5" stroke="#fff" stroke-width="0.8" fill="none"/></svg>
<div class="a" style="left:16px;top:2.00px;font-size:6.6px;line-height:10px;color:#555;">201602</div>
<div class="a" style="left:51.5px;top:2.00px;font-size:6.6px;line-height:10px;color:#555;">02/01/2016</div>
<div class="a" style="left:93.1px;top:2.00px;font-size:6.6px;line-height:10px;color:#555;width:28.5px;overflow:hidden">02/29/2016</div>
</div>
<div class="a" style="left:720.5px;top:229.3px;width:122px;height:11.199999999999989px;overflow:hidden">
<svg class="a" style="left:2.5px;top:3.5px" width="6.5" height="6.5" viewBox="0 0 8 8"><rect x="0" y="0" width="8" height="8" fill="#1f66c1"/><path d="M1.8 4.1 L3.3 5.6 L6.3 2.5" stroke="#fff" stroke-width="0.8" fill="none"/></svg>
<div class="a" style="left:16px;top:2.00px;font-size:6.6px;line-height:10px;color:#555;">201603</div>
<div class="a" style="left:51.5px;top:2.00px;font-size:6.6px;line-height:10px;color:#555;">03/01/2016</div>
<div class="a" style="left:93.1px;top:2.00px;font-size:6.6px;line-height:10px;color:#555;width:28.5px;overflow:hidden">03/31/2016</div>
</div>
<div class="a" style="left:842.5px;top:185px;width:5px;height:58px;background:#f1f1f1"></div>
<div class="a" style="left:842.8px;top:185px;width:4.5px;height:8.6px;background:#8f8f8f;border-radius:1px"></div>
<div class="a" style="left:720.3px;top:238.3px;width:114.2px;height:4px;background:#8f8f8f;border-radius:1px"></div>
<div class="a" style="left:714.2px;top:254.6px;width:139.3px;height:163px;border:0.8px solid #e3e3e3;background:#fff"></div>
<div class="a" style="left:719.6px;top:255.3px;width:128.6px;height:26px;background:#fff;box-shadow:0.5px 1px 1.5px rgba(0,0,0,0.18)"></div>
<div class="a" style="left:720px;top:258.90px;font-size:7.8px;line-height:10px;color:#333;">Account</div>
<svg class="a" style="left:815.5px;top:259px" width="8" height="9" viewBox="0 0 8 9"><path d="M1.2 2 H6.8 V8.4 H1.2 Z M0.6 1.3 H7.4 M2.8 1.3 V0.5 H5.2 V1.3" stroke="#5a86cc" stroke-width="0.8" fill="none"/><rect x="2.4" y="3.2" width="3.2" height="4" fill="#a9c0e6"/></svg>
<svg class="a" style="left:830.5px;top:259.5px" width="9" height="5" viewBox="0 0 9 5"><path d="M0.6 4.1 L4.1 0.8 L7.6 4.1" stroke="#777" stroke-width="0.75" fill="none"/></svg>
<div class="a" style="left:719.3px;top:282.4px;width:128.5px;height:17px;border:0.8px solid #9e9e9e;border-radius:1.5px;background:#fff"></div>
<svg class="a" style="left:726.5px;top:287px" width="9" height="9" viewBox="0 0 9 9"><path d="M0.6 0.8 H8.4 L5.3 4.6 V8.3 L3.7 7.3 V4.6 Z" stroke="#4a7bc8" stroke-width="0.8" fill="none" stroke-linejoin="round"/></svg>
<div class="a" style="left:738.9px;top:286.40px;font-size:7.6px;line-height:10px;color:#555;">(all)</div>
<div class="a" style="left:719.6px;top:304.4px;width:128.4px;height:108px;border:0.8px solid #e6e6e6;background:#fff"></div>
<svg class="a" style="left:728px;top:309px" width="9" height="9" viewBox="0 0 9 9"><circle cx="5.6" cy="3.4" r="2.6" stroke="#4a7bc8" stroke-width="0.8" fill="none"/><path d="M3.7 5.3 L0.7 8.3" stroke="#4a7bc8" stroke-width="0.8"/></svg>
<div class="a" style="left:740.9px;top:309.00px;font-size:7.6px;line-height:10px;color:#777;">Search</div>
<div class="a" style="left:722.7px;top:321.2px;width:119.7px;height:0.8px;background:#999"></div>
<div class="a" style="left:720.5px;top:322px;width:122px;height:90px;overflow:hidden">
<div class="a" style="left:2.5px;top:4.9999999999999885px;width:7.4px;height:7.4px;border:0.8px solid #8c8c8c;background:#fff"></div>
<div class="a" style="left:14.3px;top:3.70px;font-size:7.6px;line-height:10px;color:#333;font-weight:bold;">(Select all)</div>
<div class="a" style="left:2.5px;top:16.3px;width:7.4px;height:7.4px;border:0.8px solid #8c8c8c;background:#fff"></div>
<div class="a" style="left:14.3px;top:15.00px;font-size:7.5px;line-height:10px;color:#555;">(null)</div>
<div class="a" style="left:2.5px;top:29.900000000000023px;width:7.4px;height:7.4px;border:0.8px solid #8c8c8c;background:#fff"></div>
<div class="a" style="left:14.3px;top:28.60px;font-size:7.5px;line-height:10px;color:#555;">10100</div>
<div class="a" style="left:71px;top:28.60px;font-size:7.5px;line-height:10px;color:#555;">Cash</div>
<div class="a" style="left:2.5px;top:43.999999999999986px;width:7.4px;height:7.4px;border:0.8px solid #8c8c8c;background:#fff"></div>
<div class="a" style="left:14.3px;top:42.70px;font-size:7.5px;line-height:10px;color:#555;">11100</div>
<div class="a" style="left:71px;top:42.70px;font-size:7.5px;line-height:10px;color:#555;">Accounts Re...</div>
<div class="a" style="left:2.5px;top:57.699999999999974px;width:7.4px;height:7.4px;border:0.8px solid #8c8c8c;background:#fff"></div>
<div class="a" style="left:14.3px;top:56.40px;font-size:7.5px;line-height:10px;color:#555;">11110</div>
<div class="a" style="left:71px;top:56.40px;font-size:7.5px;line-height:10px;color:#555;">Intercompan...</div>
<div class="a" style="left:2.5px;top:71.60000000000001px;width:7.4px;height:7.4px;border:0.8px solid #8c8c8c;background:#fff"></div>
<div class="a" style="left:14.3px;top:70.30px;font-size:7.5px;line-height:10px;color:#555;">12000</div>
<div class="a" style="left:71px;top:70.30px;font-size:7.5px;line-height:10px;color:#555;">Inventory</div>
<div class="a" style="left:2.5px;top:85.3px;width:7.4px;height:7.4px;border:0.8px solid #8c8c8c;background:#fff"></div>
<div class="a" style="left:14.3px;top:84.00px;font-size:7.5px;line-height:10px;color:#555;">13000</div>
<div class="a" style="left:71px;top:84.00px;font-size:7.5px;line-height:10px;color:#555;">Prepaid</div>
</div>
<div class="a" style="left:842.5px;top:322px;width:5.3px;height:90px;background:#f1f1f1"></div>
<div class="a" style="left:842.8px;top:322px;width:4.8px;height:9px;background:#8f8f8f;border-radius:1px"></div>
<div class="a" style="left:714px;top:423.7px;width:140px;height:29px;border:0.8px solid #e3e3e3;background:#fff"></div>
<div class="a" style="left:719.2px;top:424.4px;width:129.5px;height:27.6px;background:#fff;box-shadow:0.5px 1px 1.5px rgba(0,0,0,0.18)"></div>
<div class="a" style="left:719.5px;top:427.50px;font-size:7.8px;line-height:10px;color:#333;">Category</div>
<div class="a" style="left:719.5px;top:441.60px;font-size:7.5px;line-height:10px;color:#444;">is (all)</div>
<svg class="a" style="left:830.5px;top:428.7px" width="8" height="9" viewBox="0 0 8 9"><path d="M1.2 2 H6.8 V8.4 H1.2 Z M0.6 1.3 H7.4 M2.8 1.3 V0.5 H5.2 V1.3" stroke="#5a86cc" stroke-width="0.8" fill="none"/><rect x="2.4" y="3.2" width="3.2" height="4" fill="#a9c0e6"/></svg>
<svg class="a" style="left:845.5px;top:430.2px" width="9" height="5" viewBox="0 0 9 5"><path d="M0.6 0.8 L4.1 4.1 L7.6 0.8" stroke="#777" stroke-width="0.75" fill="none"/></svg>
<div class="a" style="left:714px;top:457.5px;width:140px;height:29px;border:0.8px solid #e3e3e3;background:#fff"></div>
<div class="a" style="left:719.2px;top:458.2px;width:129.5px;height:27.6px;background:#fff;box-shadow:0.5px 1px 1.5px rgba(0,0,0,0.18)"></div>
<div class="a" style="left:719.5px;top:461.30px;font-size:7.8px;line-height:10px;color:#333;">Department</div>
<div class="a" style="left:719.5px;top:475.40px;font-size:7.5px;line-height:10px;color:#444;">is (all)</div>
<svg class="a" style="left:830.5px;top:462.5px" width="8" height="9" viewBox="0 0 8 9"><path d="M1.2 2 H6.8 V8.4 H1.2 Z M0.6 1.3 H7.4 M2.8 1.3 V0.5 H5.2 V1.3" stroke="#5a86cc" stroke-width="0.8" fill="none"/><rect x="2.4" y="3.2" width="3.2" height="4" fill="#a9c0e6"/></svg>
<svg class="a" style="left:845.5px;top:464.0px" width="9" height="5" viewBox="0 0 9 5"><path d="M0.6 0.8 L4.1 4.1 L7.6 0.8" stroke="#777" stroke-width="0.75" fill="none"/></svg>
<div class="a" style="left:714px;top:491.7px;width:140px;height:29px;border:0.8px solid #e3e3e3;background:#fff"></div>
<div class="a" style="left:719.2px;top:492.4px;width:129.5px;height:27.6px;background:#fff;box-shadow:0.5px 1px 1.5px rgba(0,0,0,0.18)"></div>
<div class="a" style="left:719.5px;top:495.50px;font-size:7.8px;line-height:10px;color:#333;">Entity</div>
<div class="a" style="left:719.5px;top:509.60px;font-size:7.5px;line-height:10px;color:#444;">is (all)</div>
<svg class="a" style="left:830.5px;top:496.7px" width="8" height="9" viewBox="0 0 8 9"><path d="M1.2 2 H6.8 V8.4 H1.2 Z M0.6 1.3 H7.4 M2.8 1.3 V0.5 H5.2 V1.3" stroke="#5a86cc" stroke-width="0.8" fill="none"/><rect x="2.4" y="3.2" width="3.2" height="4" fill="#a9c0e6"/></svg>
<svg class="a" style="left:845.5px;top:498.2px" width="9" height="5" viewBox="0 0 9 5"><path d="M0.6 0.8 L4.1 4.1 L7.6 0.8" stroke="#777" stroke-width="0.75" fill="none"/></svg>
<div class="a" style="left:868.5px;top:51.6px;width:161.5px;height:475.4px;background:#f7f6f5"></div>
<div class="a" style="left:868.5px;top:51.6px;width:0.8px;height:475.4px;background:#e9e9e9"></div>
<svg class="a" style="left:874px;top:61px" width="10" height="10" viewBox="0 0 10 10"><rect x="0.7" y="0.9" width="2.2" height="8" fill="#5f5a88"/><rect x="4" y="1" width="1" height="0.9" fill="#6a6f90"/><rect x="4" y="3.9" width="1" height="0.9" fill="#6a6f90"/><rect x="4" y="6.8" width="1" height="0.9" fill="#6a6f90"/><rect x="5.8" y="1" width="3.2" height="0.9" fill="#5a5a6a"/><rect x="5.8" y="3.9" width="3.2" height="0.9" fill="#5a5a6a"/><rect x="5.8" y="6.8" width="3.2" height="0.9" fill="#6a6a7a"/></svg>
<div class="a" style="left:890px;top:57.5px;font-size:11px;line-height:13px;color:#333">Fields</div>
<svg class="a" style="left:1017.5px;top:58.5px" width="5" height="9" viewBox="0 0 5 9"><path d="M0.7 0.7 L4.2 4.5 L0.7 8.3" stroke="#777" stroke-width="0.8" fill="none"/></svg>
<div class="a" style="left:875px;top:86.80px;font-size:7.7px;line-height:10px;color:#333;font-weight:bold;">Module</div>
<div class="a" style="left:875px;top:99.9px;width:149px;height:16.3px;background:#edeceb"></div>
<div class="a" style="left:878.5px;top:102.50px;font-size:7.6px;line-height:10px;color:#a0a0a0;">General Ledger</div>
<svg class="a" style="left:1013px;top:106px" width="7" height="4" viewBox="0 0 7 4"><path d="M0.5 0.5 L3.5 3.3 L6.5 0.5" stroke="#bbb" stroke-width="0.7" fill="none"/></svg>
<svg class="a" style="left:883.5px;top:120.3px" width="9" height="9" viewBox="0 0 9 9"><circle cx="5.6" cy="3.4" r="2.6" stroke="#4a7bc8" stroke-width="0.8" fill="none"/><path d="M3.7 5.3 L0.7 8.3" stroke="#4a7bc8" stroke-width="0.8"/></svg>
<div class="a" style="left:896px;top:119.60px;font-size:7.6px;line-height:10px;color:#777;">Search</div>
<div class="a" style="left:875px;top:133.2px;width:149px;height:0.9px;background:#888"></div>
<svg class="a" style="left:877.4px;top:139.2px" width="6" height="4" viewBox="0 0 6 4"><path d="M0.5 0.6 L3 3.2 L5.5 0.6" stroke="#5f7fb8" stroke-width="0.7" fill="none"/></svg>
<svg class="a" style="left:888.2px;top:138.3px" width="8.5" height="6" viewBox="0 0 8.5 6"><path d="M0.5 5.3 V0.7 H3 L3.8 1.5 H7 V2.5 M0.5 5.3 L1.5 2.5 H8 L7 5.3 Z" stroke="#777" stroke-width="0.6" fill="none"/></svg>
<div class="a" style="left:900.8px;top:136.30px;font-size:7.6px;line-height:10px;color:#333;font-weight:bold;">General Ledger</div>
<svg class="a" style="left:884px;top:153.4px" width="4" height="6" viewBox="0 0 4 6"><path d="M0.6 0.5 L3.2 2.8 L0.6 5.1" stroke="#6b7fc0" stroke-width="0.7" fill="none"/></svg>
<svg class="a" style="left:891.2px;top:152.20000000000002px" width="7.9" height="7.9" viewBox="0 0 8 8"><rect x="0" y="0" width="8" height="8" fill="#1f66c1"/><path d="M1.8 4.1 L3.3 5.6 L6.3 2.5" stroke="#fff" stroke-width="0.8" fill="none"/></svg>
<svg class="a" style="left:902.6px;top:152.20000000000002px" width="8" height="8" viewBox="0 0 8 8"><circle cx="1.9" cy="1.5" r="1.15" stroke="#8a8a8a" stroke-width="0.6" fill="none"/><circle cx="1.9" cy="6" r="1.15" stroke="#8a8a8a" stroke-width="0.6" fill="none"/><path d="M1.9 2.65 V4.85" stroke="#8a8a8a" stroke-width="0.6" fill="none"/><rect x="3.7" y="5.2" width="1.5" height="1.7" fill="#9a9a9a"/><rect x="5.6" y="5.2" width="1.5" height="1.7" fill="#9a9a9a"/></svg>
<div class="a" style="left:914.4px;top:151.80px;font-size:7.68px;line-height:10px;color:#333;font-weight:bold;">Account</div>
<svg class="a" style="left:1011.1px;top:153.3px" width="8.2" height="7" viewBox="0 0 8.2 7"><path d="M0 0 H8.2 V1.3 L5.3 4 V7 H2.9 V4 L0 1.3 Z" fill="#1a66c2"/></svg>
<svg class="a" style="left:884px;top:168.33px" width="4" height="6" viewBox="0 0 4 6"><path d="M0.6 0.5 L3.2 2.8 L0.6 5.1" stroke="#6b7fc0" stroke-width="0.7" fill="none"/></svg>
<svg class="a" style="left:891.2px;top:167.13000000000002px" width="7.9" height="7.9" viewBox="0 0 8 8"><rect x="0" y="0" width="8" height="8" fill="#1f66c1"/><path d="M1.8 4.1 L3.3 5.6 L6.3 2.5" stroke="#fff" stroke-width="0.8" fill="none"/></svg>
<svg class="a" style="left:902.6px;top:167.13000000000002px" width="8" height="8" viewBox="0 0 8 8"><circle cx="1.9" cy="1.5" r="1.15" stroke="#8a8a8a" stroke-width="0.6" fill="none"/><circle cx="1.9" cy="6" r="1.15" stroke="#8a8a8a" stroke-width="0.6" fill="none"/><path d="M1.9 2.65 V4.85" stroke="#8a8a8a" stroke-width="0.6" fill="none"/><rect x="3.7" y="5.2" width="1.5" height="1.7" fill="#9a9a9a"/><rect x="5.6" y="5.2" width="1.5" height="1.7" fill="#9a9a9a"/></svg>
<div class="a" style="left:914.4px;top:166.73px;font-size:7.68px;line-height:10px;color:#333;font-weight:bold;">Category</div>
<svg class="a" style="left:1011.1px;top:168.23000000000002px" width="8.2" height="7" viewBox="0 0 8.2 7"><path d="M0 0 H8.2 V1.3 L5.3 4 V7 H2.9 V4 L0 1.3 Z" fill="#1a66c2"/></svg>
<svg class="a" style="left:884px;top:183.26000000000002px" width="4" height="6" viewBox="0 0 4 6"><path d="M0.6 0.5 L3.2 2.8 L0.6 5.1" stroke="#6b7fc0" stroke-width="0.7" fill="none"/></svg>
<svg class="a" style="left:891.2px;top:182.06000000000003px" width="7.9" height="7.9" viewBox="0 0 8 8"><rect x="0" y="0" width="8" height="8" fill="#1f66c1"/><path d="M1.8 4.1 L3.3 5.6 L6.3 2.5" stroke="#fff" stroke-width="0.8" fill="none"/></svg>
<svg class="a" style="left:902.6px;top:182.06000000000003px" width="8" height="8" viewBox="0 0 8 8"><circle cx="1.9" cy="1.5" r="1.15" stroke="#8a8a8a" stroke-width="0.6" fill="none"/><circle cx="1.9" cy="6" r="1.15" stroke="#8a8a8a" stroke-width="0.6" fill="none"/><path d="M1.9 2.65 V4.85" stroke="#8a8a8a" stroke-width="0.6" fill="none"/><rect x="3.7" y="5.2" width="1.5" height="1.7" fill="#9a9a9a"/><rect x="5.6" y="5.2" width="1.5" height="1.7" fill="#9a9a9a"/></svg>
<div class="a" style="left:914.4px;top:181.66px;font-size:7.68px;line-height:10px;color:#333;font-weight:bold;">Corresponding Entity</div>
<svg class="a" style="left:1011.1px;top:183.16000000000003px" width="8.2" height="7" viewBox="0 0 8.2 7"><path d="M0 0 H8.2 V1.3 L5.3 4 V7 H2.9 V4 L0 1.3 Z" fill="#1a66c2"/></svg>
<svg class="a" style="left:884px;top:198.19000000000003px" width="4" height="6" viewBox="0 0 4 6"><path d="M0.6 0.5 L3.2 2.8 L0.6 5.1" stroke="#6b7fc0" stroke-width="0.7" fill="none"/></svg>
<div class="a" style="left:891.2px;top:196.99000000000004px;width:7.9px;height:7.9px;border:0.8px solid #8c8c8c;background:#fff"></div>
<svg class="a" style="left:902.6px;top:196.99000000000004px" width="8" height="8" viewBox="0 0 8 8"><circle cx="1.9" cy="1.5" r="1.15" stroke="#8a8a8a" stroke-width="0.6" fill="none"/><circle cx="1.9" cy="6" r="1.15" stroke="#8a8a8a" stroke-width="0.6" fill="none"/><path d="M1.9 2.65 V4.85" stroke="#8a8a8a" stroke-width="0.6" fill="none"/><rect x="3.7" y="5.2" width="1.5" height="1.7" fill="#9a9a9a"/><rect x="5.6" y="5.2" width="1.5" height="1.7" fill="#9a9a9a"/></svg>
<div class="a" style="left:914.4px;top:196.59px;font-size:7.6px;line-height:10px;color:#5a5a5a;">Currency</div>
<svg class="a" style="left:1011.1px;top:198.09000000000003px" width="8.2" height="7" viewBox="0 0 8.2 7"><path d="M0 0 H8.2 V1.3 L5.3 4 V7 H2.9 V4 L0 1.3 Z" fill="#cfcfcf"/></svg>
<svg class="a" style="left:884px;top:213.12000000000003px" width="4" height="6" viewBox="0 0 4 6"><path d="M0.6 0.5 L3.2 2.8 L0.6 5.1" stroke="#6b7fc0" stroke-width="0.7" fill="none"/></svg>
<svg class="a" style="left:891.2px;top:211.92000000000004px" width="7.9" height="7.9" viewBox="0 0 8 8"><rect x="0" y="0" width="8" height="8" fill="#1f66c1"/><path d="M1.8 4.1 L3.3 5.6 L6.3 2.5" stroke="#fff" stroke-width="0.8" fill="none"/></svg>
<svg class="a" style="left:902.6px;top:211.92000000000004px" width="8" height="8" viewBox="0 0 8 8"><circle cx="1.9" cy="1.5" r="1.15" stroke="#8a8a8a" stroke-width="0.6" fill="none"/><circle cx="1.9" cy="6" r="1.15" stroke="#8a8a8a" stroke-width="0.6" fill="none"/><path d="M1.9 2.65 V4.85" stroke="#8a8a8a" stroke-width="0.6" fill="none"/><rect x="3.7" y="5.2" width="1.5" height="1.7" fill="#9a9a9a"/><rect x="5.6" y="5.2" width="1.5" height="1.7" fill="#9a9a9a"/></svg>
<div class="a" style="left:914.4px;top:211.52px;font-size:7.68px;line-height:10px;color:#333;font-weight:bold;">Department</div>
<svg class="a" style="left:1011.1px;top:213.02000000000004px" width="8.2" height="7" viewBox="0 0 8.2 7"><path d="M0 0 H8.2 V1.3 L5.3 4 V7 H2.9 V4 L0 1.3 Z" fill="#1a66c2"/></svg>
<svg class="a" style="left:884px;top:228.05000000000004px" width="4" height="6" viewBox="0 0 4 6"><path d="M0.6 0.5 L3.2 2.8 L0.6 5.1" stroke="#6b7fc0" stroke-width="0.7" fill="none"/></svg>
<svg class="a" style="left:891.2px;top:226.85000000000005px" width="7.9" height="7.9" viewBox="0 0 8 8"><rect x="0" y="0" width="8" height="8" fill="#1f66c1"/><path d="M1.8 4.1 L3.3 5.6 L6.3 2.5" stroke="#fff" stroke-width="0.8" fill="none"/></svg>
<svg class="a" style="left:902.6px;top:226.85000000000005px" width="8" height="8" viewBox="0 0 8 8"><circle cx="1.9" cy="1.5" r="1.15" stroke="#8a8a8a" stroke-width="0.6" fill="none"/><circle cx="1.9" cy="6" r="1.15" stroke="#8a8a8a" stroke-width="0.6" fill="none"/><path d="M1.9 2.65 V4.85" stroke="#8a8a8a" stroke-width="0.6" fill="none"/><rect x="3.7" y="5.2" width="1.5" height="1.7" fill="#9a9a9a"/><rect x="5.6" y="5.2" width="1.5" height="1.7" fill="#9a9a9a"/></svg>
<div class="a" style="left:914.4px;top:226.45px;font-size:7.68px;line-height:10px;color:#333;font-weight:bold;">Entity</div>
<svg class="a" style="left:1011.1px;top:227.95000000000005px" width="8.2" height="7" viewBox="0 0 8.2 7"><path d="M0 0 H8.2 V1.3 L5.3 4 V7 H2.9 V4 L0 1.3 Z" fill="#1a66c2"/></svg>
<svg class="a" style="left:884px;top:242.98000000000005px" width="4" height="6" viewBox="0 0 4 6"><path d="M0.6 0.5 L3.2 2.8 L0.6 5.1" stroke="#6b7fc0" stroke-width="0.7" fill="none"/></svg>
<div class="a" style="left:891.2px;top:241.78000000000006px;width:7.9px;height:7.9px;border:0.8px solid #8c8c8c;background:#fff"></div>
<svg class="a" style="left:902.6px;top:241.78000000000006px" width="8" height="8" viewBox="0 0 8 8"><circle cx="1.9" cy="1.5" r="1.15" stroke="#8a8a8a" stroke-width="0.6" fill="none"/><circle cx="1.9" cy="6" r="1.15" stroke="#8a8a8a" stroke-width="0.6" fill="none"/><path d="M1.9 2.65 V4.85" stroke="#8a8a8a" stroke-width="0.6" fill="none"/><rect x="3.7" y="5.2" width="1.5" height="1.7" fill="#9a9a9a"/><rect x="5.6" y="5.2" width="1.5" height="1.7" fill="#9a9a9a"/></svg>
<div class="a" style="left:914.4px;top:241.38px;font-size:7.6px;line-height:10px;color:#5a5a5a;">Interco Parent</div>
<svg class="a" style="left:1011.1px;top:242.88000000000005px" width="8.2" height="7" viewBox="0 0 8.2 7"><path d="M0 0 H8.2 V1.3 L5.3 4 V7 H2.9 V4 L0 1.3 Z" fill="#cfcfcf"/></svg>
<svg class="a" style="left:884px;top:257.9100000000001px" width="4" height="6" viewBox="0 0 4 6"><path d="M0.6 0.5 L3.2 2.8 L0.6 5.1" stroke="#6b7fc0" stroke-width="0.7" fill="none"/></svg>
<svg class="a" style="left:891.2px;top:256.71000000000004px" width="7.9" height="7.9" viewBox="0 0 8 8"><rect x="0" y="0" width="8" height="8" fill="#1f66c1"/><path d="M1.8 4.1 L3.3 5.6 L6.3 2.5" stroke="#fff" stroke-width="0.8" fill="none"/></svg>
<svg class="a" style="left:902.6px;top:256.71000000000004px" width="8" height="8" viewBox="0 0 8 8"><circle cx="1.9" cy="1.5" r="1.15" stroke="#8a8a8a" stroke-width="0.6" fill="none"/><circle cx="1.9" cy="6" r="1.15" stroke="#8a8a8a" stroke-width="0.6" fill="none"/><path d="M1.9 2.65 V4.85" stroke="#8a8a8a" stroke-width="0.6" fill="none"/><rect x="3.7" y="5.2" width="1.5" height="1.7" fill="#9a9a9a"/><rect x="5.6" y="5.2" width="1.5" height="1.7" fill="#9a9a9a"/></svg>
<div class="a" style="left:914.4px;top:256.31px;font-size:7.68px;line-height:10px;color:#333;font-weight:bold;">Line Details</div>
<svg class="a" style="left:1011.1px;top:257.81000000000006px" width="8.2" height="7" viewBox="0 0 8.2 7"><path d="M0 0 H8.2 V1.3 L5.3 4 V7 H2.9 V4 L0 1.3 Z" fill="#1a66c2"/></svg>
<svg class="a" style="left:884px;top:272.8400000000001px" width="4" height="6" viewBox="0 0 4 6"><path d="M0.6 0.5 L3.2 2.8 L0.6 5.1" stroke="#6b7fc0" stroke-width="0.7" fill="none"/></svg>
<div class="a" style="left:891.2px;top:271.64000000000004px;width:7.9px;height:7.9px;border:0.8px solid #8c8c8c;background:#fff"></div>
<svg class="a" style="left:902.6px;top:271.64000000000004px" width="8" height="8" viewBox="0 0 8 8"><circle cx="1.9" cy="1.5" r="1.15" stroke="#8a8a8a" stroke-width="0.6" fill="none"/><circle cx="1.9" cy="6" r="1.15" stroke="#8a8a8a" stroke-width="0.6" fill="none"/><path d="M1.9 2.65 V4.85" stroke="#8a8a8a" stroke-width="0.6" fill="none"/><rect x="3.7" y="5.2" width="1.5" height="1.7" fill="#9a9a9a"/><rect x="5.6" y="5.2" width="1.5" height="1.7" fill="#9a9a9a"/></svg>
<div class="a" style="left:914.4px;top:271.24px;font-size:7.6px;line-height:10px;color:#5a5a5a;">Minority Parent</div>
<svg class="a" style="left:1011.1px;top:272.74000000000007px" width="8.2" height="7" viewBox="0 0 8.2 7"><path d="M0 0 H8.2 V1.3 L5.3 4 V7 H2.9 V4 L0 1.3 Z" fill="#cfcfcf"/></svg>
<svg class="a" style="left:884px;top:287.7700000000001px" width="4" height="6" viewBox="0 0 4 6"><path d="M0.6 0.5 L3.2 2.8 L0.6 5.1" stroke="#6b7fc0" stroke-width="0.7" fill="none"/></svg>
<svg class="a" style="left:891.2px;top:286.57000000000005px" width="7.9" height="7.9" viewBox="0 0 8 8"><rect x="0" y="0" width="8" height="8" fill="#1f66c1"/><path d="M1.8 4.1 L3.3 5.6 L6.3 2.5" stroke="#fff" stroke-width="0.8" fill="none"/></svg>
<svg class="a" style="left:902.6px;top:286.57000000000005px" width="8" height="8" viewBox="0 0 8 8"><circle cx="1.9" cy="1.5" r="1.15" stroke="#8a8a8a" stroke-width="0.6" fill="none"/><circle cx="1.9" cy="6" r="1.15" stroke="#8a8a8a" stroke-width="0.6" fill="none"/><path d="M1.9 2.65 V4.85" stroke="#8a8a8a" stroke-width="0.6" fill="none"/><rect x="3.7" y="5.2" width="1.5" height="1.7" fill="#9a9a9a"/><rect x="5.6" y="5.2" width="1.5" height="1.7" fill="#9a9a9a"/></svg>
<div class="a" style="left:914.4px;top:286.17px;font-size:7.68px;line-height:10px;color:#333;font-weight:bold;">Period</div>
<svg class="a" style="left:1011.1px;top:287.6700000000001px" width="8.2" height="7" viewBox="0 0 8.2 7"><path d="M0 0 H8.2 V1.3 L5.3 4 V7 H2.9 V4 L0 1.3 Z" fill="#1a66c2"/></svg>
<svg class="a" style="left:884px;top:302.7000000000001px" width="4" height="6" viewBox="0 0 4 6"><path d="M0.6 0.5 L3.2 2.8 L0.6 5.1" stroke="#6b7fc0" stroke-width="0.7" fill="none"/></svg>
<svg class="a" style="left:891.2px;top:301.50000000000006px" width="7.9" height="7.9" viewBox="0 0 8 8"><rect x="0" y="0" width="8" height="8" fill="#1f66c1"/><path d="M1.8 4.1 L3.3 5.6 L6.3 2.5" stroke="#fff" stroke-width="0.8" fill="none"/></svg>
<svg class="a" style="left:902.6px;top:301.50000000000006px" width="8" height="8" viewBox="0 0 8 8"><circle cx="1.9" cy="1.5" r="1.15" stroke="#8a8a8a" stroke-width="0.6" fill="none"/><circle cx="1.9" cy="6" r="1.15" stroke="#8a8a8a" stroke-width="0.6" fill="none"/><path d="M1.9 2.65 V4.85" stroke="#8a8a8a" stroke-width="0.6" fill="none"/><rect x="3.7" y="5.2" width="1.5" height="1.7" fill="#9a9a9a"/><rect x="5.6" y="5.2" width="1.5" height="1.7" fill="#9a9a9a"/></svg>
<div class="a" style="left:914.4px;top:301.10px;font-size:7.68px;line-height:10px;color:#333;font-weight:bold;">Scenario</div>
<svg class="a" style="left:1011.1px;top:302.6000000000001px" width="8.2" height="7" viewBox="0 0 8.2 7"><path d="M0 0 H8.2 V1.3 L5.3 4 V7 H2.9 V4 L0 1.3 Z" fill="#1a66c2"/></svg>
<svg class="a" style="left:884px;top:317.6300000000001px" width="4" height="6" viewBox="0 0 4 6"><path d="M0.6 0.5 L3.2 2.8 L0.6 5.1" stroke="#6b7fc0" stroke-width="0.7" fill="none"/></svg>
<div class="a" style="left:891.2px;top:316.43000000000006px;width:7.9px;height:7.9px;border:0.8px solid #8c8c8c;background:#fff"></div>
<svg class="a" style="left:902.6px;top:316.43000000000006px" width="8" height="8" viewBox="0 0 8 8"><circle cx="1.9" cy="1.5" r="1.15" stroke="#8a8a8a" stroke-width="0.6" fill="none"/><circle cx="1.9" cy="6" r="1.15" stroke="#8a8a8a" stroke-width="0.6" fill="none"/><path d="M1.9 2.65 V4.85" stroke="#8a8a8a" stroke-width="0.6" fill="none"/><rect x="3.7" y="5.2" width="1.5" height="1.7" fill="#9a9a9a"/><rect x="5.6" y="5.2" width="1.5" height="1.7" fill="#9a9a9a"/></svg>
<div class="a" style="left:914.4px;top:316.03px;font-size:7.6px;line-height:10px;color:#5a5a5a;">Source System</div>
<svg class="a" style="left:1011.1px;top:317.5300000000001px" width="8.2" height="7" viewBox="0 0 8.2 7"><path d="M0 0 H8.2 V1.3 L5.3 4 V7 H2.9 V4 L0 1.3 Z" fill="#cfcfcf"/></svg>
<div class="a" style="left:891.2px;top:331.5600000000001px;width:7.7px;height:7.7px;border:0.8px solid #8c8c8c;background:#fff"></div>
<svg class="a" style="left:902.2px;top:333.4600000000001px" width="8" height="5" viewBox="0 0 8 5"><path d="M0.4 0.4 H3.6 V4.6 H0.4 Z M4.4 0.4 H7.6 V4.6 H4.4 Z" stroke="#777" stroke-width="0.65" fill="none"/></svg>
<div class="a" style="left:914.5px;top:330.96px;font-size:7.6px;line-height:10px;color:#5a5a5a;">Level One Approval Co...</div>
<svg class="a" style="left:1011.1px;top:332.4600000000001px" width="8.2" height="7" viewBox="0 0 8.2 7"><path d="M0 0 H8.2 V1.3 L5.3 4 V7 H2.9 V4 L0 1.3 Z" fill="#cfcfcf"/></svg>
<div class="a" style="left:891.2px;top:346.4900000000001px;width:7.7px;height:7.7px;border:0.8px solid #8c8c8c;background:#fff"></div>
<svg class="a" style="left:902.2px;top:348.3900000000001px" width="8" height="5" viewBox="0 0 8 5"><path d="M0.4 0.4 H3.6 V4.6 H0.4 Z M4.4 0.4 H7.6 V4.6 H4.4 Z" stroke="#777" stroke-width="0.65" fill="none"/></svg>
<div class="a" style="left:914.5px;top:345.89px;font-size:7.6px;line-height:10px;color:#5a5a5a;">Level Two Approval Co...</div>
<svg class="a" style="left:1011.1px;top:347.3900000000001px" width="8.2" height="7" viewBox="0 0 8.2 7"><path d="M0 0 H8.2 V1.3 L5.3 4 V7 H2.9 V4 L0 1.3 Z" fill="#cfcfcf"/></svg>
<div class="a" style="left:891.2px;top:361.42000000000013px;width:7.7px;height:7.7px;border:0.8px solid #8c8c8c;background:#fff"></div>
<svg class="a" style="left:902.2px;top:363.3200000000001px" width="8" height="5" viewBox="0 0 8 5"><path d="M0.4 0.4 H3.6 V4.6 H0.4 Z M4.4 0.4 H7.6 V4.6 H4.4 Z" stroke="#777" stroke-width="0.65" fill="none"/></svg>
<div class="a" style="left:914.5px;top:360.82px;font-size:7.6px;line-height:10px;color:#5a5a5a;">RowComment</div>
<svg class="a" style="left:1011.1px;top:362.3200000000001px" width="8.2" height="7" viewBox="0 0 8.2 7"><path d="M0 0 H8.2 V1.3 L5.3 4 V7 H2.9 V4 L0 1.3 Z" fill="#cfcfcf"/></svg>
<div class="a" style="left:891.2px;top:376.35000000000014px;width:7.7px;height:7.7px;border:0.8px solid #8c8c8c;background:#fff"></div>
<svg class="a" style="left:902.2px;top:378.2500000000001px" width="8" height="5" viewBox="0 0 8 5"><path d="M0.4 0.4 H3.6 V4.6 H0.4 Z M4.4 0.4 H7.6 V4.6 H4.4 Z" stroke="#777" stroke-width="0.65" fill="none"/></svg>
<div class="a" style="left:914.5px;top:375.75px;font-size:7.6px;line-height:10px;color:#5a5a5a;">Tree</div>
<svg class="a" style="left:1011.1px;top:377.2500000000001px" width="8.2" height="7" viewBox="0 0 8.2 7"><path d="M0 0 H8.2 V1.3 L5.3 4 V7 H2.9 V4 L0 1.3 Z" fill="#cfcfcf"/></svg>
<div class="a" style="left:891.2px;top:391.28000000000014px;width:7.7px;height:7.7px;border:0.8px solid #8c8c8c;background:#fff"></div>
<svg class="a" style="left:902.2px;top:393.1800000000001px" width="8" height="5" viewBox="0 0 8 5"><path d="M0.4 0.4 H3.6 V4.6 H0.4 Z M4.4 0.4 H7.6 V4.6 H4.4 Z" stroke="#777" stroke-width="0.65" fill="none"/></svg>
<div class="a" style="left:914.5px;top:390.68px;font-size:7.6px;line-height:10px;color:#5a5a5a;">Variance Comments</div>
<svg class="a" style="left:1011.1px;top:392.1800000000001px" width="8.2" height="7" viewBox="0 0 8.2 7"><path d="M0 0 H8.2 V1.3 L5.3 4 V7 H2.9 V4 L0 1.3 Z" fill="#cfcfcf"/></svg>
<div class="a" style="left:891.2px;top:406.21000000000015px;width:7.7px;height:7.7px;border:0.8px solid #8c8c8c;background:#fff"></div>
<div class="a" style="left:903.3px;top:405.11px;font-size:8.5px;line-height:10px;color:#444;-webkit-text-stroke:0.25px #444">&Sigma;</div>
<div class="a" style="left:915.8px;top:405.61px;font-size:7.6px;line-height:10px;color:#5a5a5a;">Annual Amount</div>
<svg class="a" style="left:891.2px;top:421.14000000000016px" width="7.7" height="7.7" viewBox="0 0 8 8"><rect x="0" y="0" width="8" height="8" fill="#1f66c1"/><path d="M1.8 4.1 L3.3 5.6 L6.3 2.5" stroke="#fff" stroke-width="0.8" fill="none"/></svg>
<div class="a" style="left:903.3px;top:420.04px;font-size:8.5px;line-height:10px;color:#444;-webkit-text-stroke:0.25px #444">&Sigma;</div>
<div class="a" style="left:915.8px;top:420.54px;font-size:7.68px;line-height:10px;color:#333;font-weight:bold;">Monthly Amount</div>
<div class="a" style="left:891.2px;top:436.07000000000016px;width:7.7px;height:7.7px;border:0.8px solid #8c8c8c;background:#fff"></div>
<div class="a" style="left:903.3px;top:434.97px;font-size:8.5px;line-height:10px;color:#444;-webkit-text-stroke:0.25px #444">&Sigma;</div>
<div class="a" style="left:915.8px;top:435.47px;font-size:7.6px;line-height:10px;color:#5a5a5a;">Other Amount</div>
<svg class="a" style="left:883.7px;top:452.00000000000017px" width="4" height="6" viewBox="0 0 4 6"><path d="M0.6 0.5 L3.2 2.8 L0.6 5.1" stroke="#6b7fc0" stroke-width="0.7" fill="none"/></svg>
<div class="a" style="left:893.6px;top:450.10px;font-size:7px;line-height:10px;color:#888;letter-spacing:0.2px">&middot;&middot;&middot;</div>
<div class="a" style="left:905.8px;top:450.40px;font-size:7.6px;line-height:10px;color:#555;">Other</div>
<svg class="a" style="left:878.7px;top:466.9300000000002px" width="4" height="6" viewBox="0 0 4 6"><path d="M0.6 0.5 L3.2 2.8 L0.6 5.1" stroke="#6b7fc0" stroke-width="0.7" fill="none"/></svg>
<svg class="a" style="left:888px;top:467.33000000000015px" width="8.5" height="6" viewBox="0 0 8.5 6"><path d="M0.5 5.3 V0.7 H3 L3.8 1.5 H7.5 V5.3 Z M0.5 2 H7.5" stroke="#777" stroke-width="0.6" fill="none"/></svg>
<div class="a" style="left:900.6px;top:465.33px;font-size:7.6px;line-height:10px;color:#555;">General Ledger Detail</div>
<svg class="a" style="left:878.7px;top:481.8600000000002px" width="4" height="6" viewBox="0 0 4 6"><path d="M0.6 0.5 L3.2 2.8 L0.6 5.1" stroke="#6b7fc0" stroke-width="0.7" fill="none"/></svg>
<svg class="a" style="left:888px;top:482.26000000000016px" width="8.5" height="6" viewBox="0 0 8.5 6"><path d="M0.5 5.3 V0.7 H3 L3.8 1.5 H7.5 V5.3 Z M0.5 2 H7.5" stroke="#777" stroke-width="0.6" fill="none"/></svg>
<div class="a" style="left:900.6px;top:480.26px;font-size:7.6px;line-height:10px;color:#555;">Line Item Details</div>
</body></html>
